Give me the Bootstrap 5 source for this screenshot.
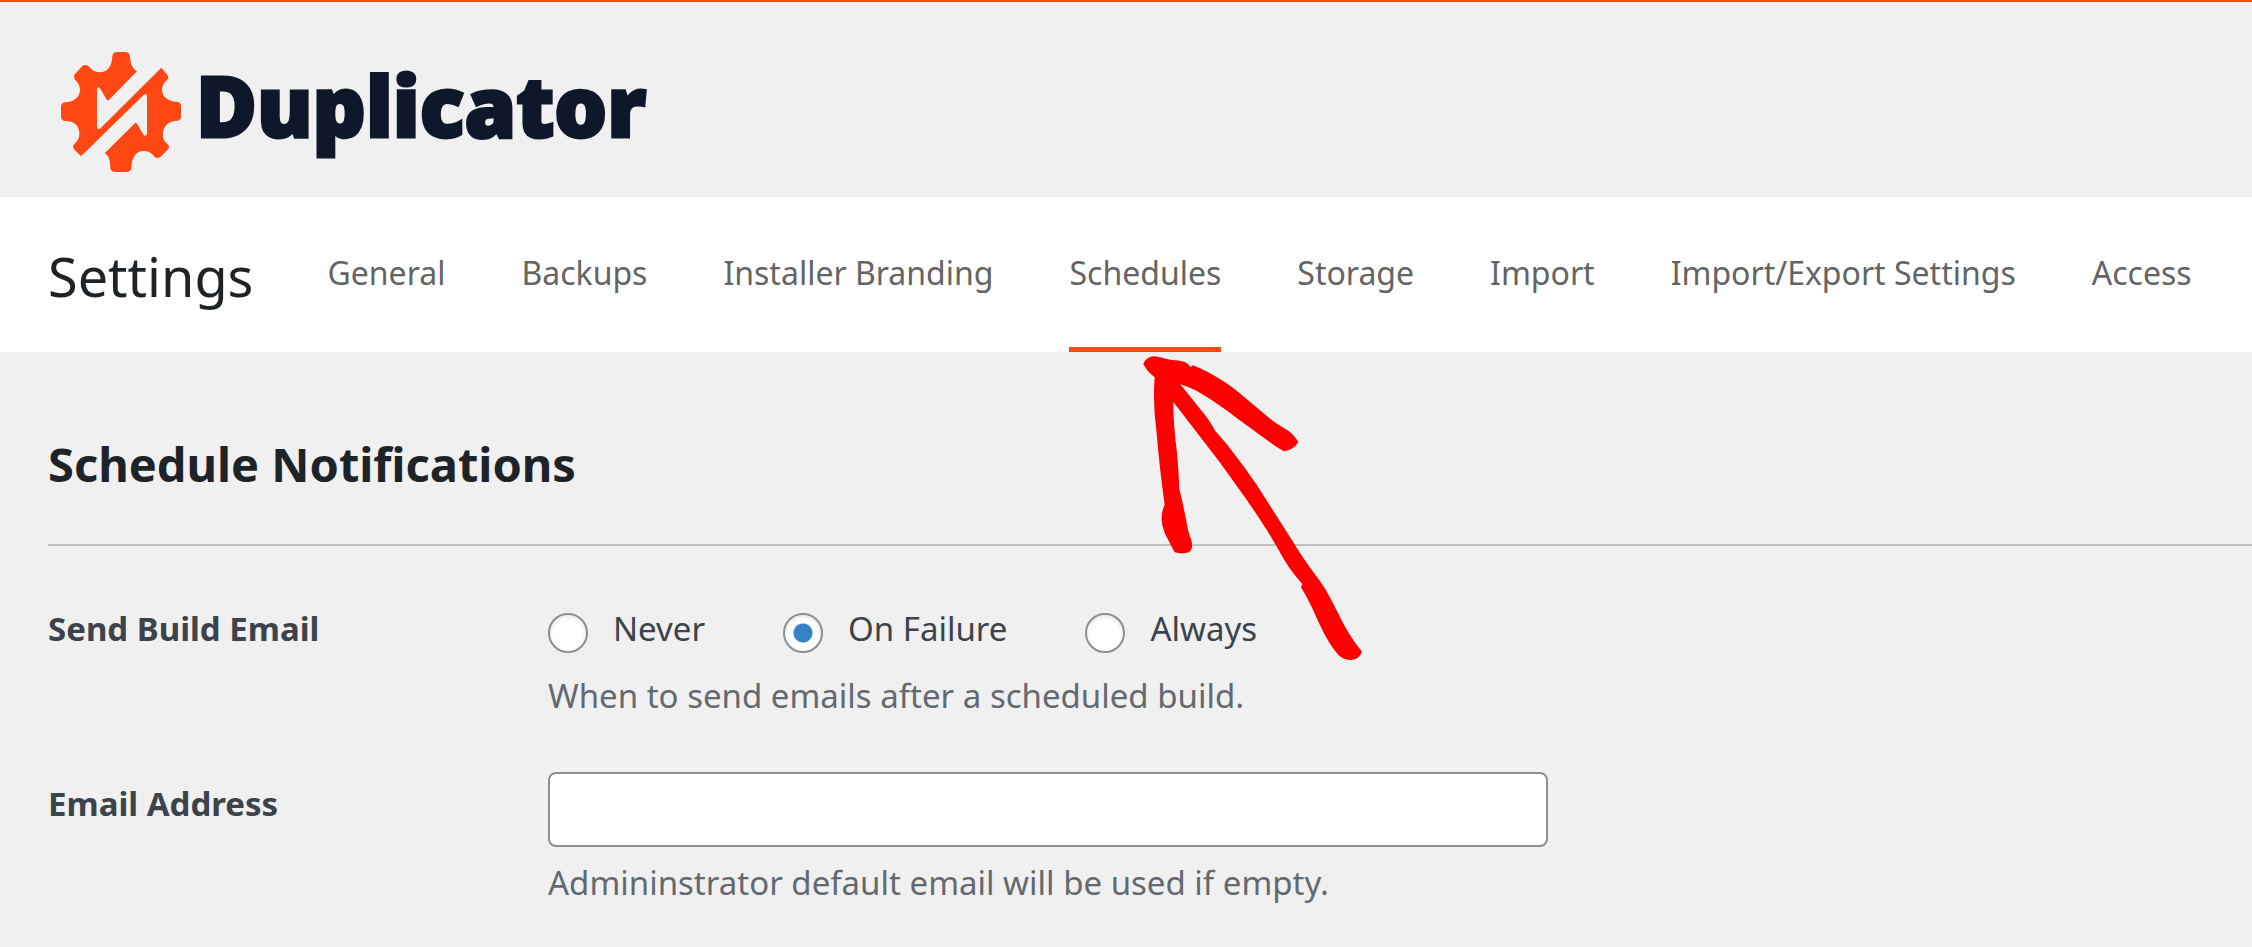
<!DOCTYPE html>
<html lang="en">
<head>
<meta charset="utf-8">
<meta name="viewport" content="width=device-width, initial-scale=1">
<title>Duplicator Settings</title>
<link href="https://cdn.jsdelivr.net/npm/bootstrap@5.3.0/dist/css/bootstrap.min.css" rel="stylesheet">
<style>
  :root { --brand: #ff4713; --gutter: 48px; }
  body { background: #f0f0f0; color: #3c434a; font-family: "Noto Sans", "Open Sans", sans-serif; font-size: 33px; line-height: 48px; overflow-x: hidden; }
  .site-head { border-top: 2px solid var(--brand); padding: 49px 60px 24px; }
  .brand-link { gap: 14px; }
  .brand-gear { width: 122px; height: 122px; }
  .wordmark { font-family: "Open Sans", sans-serif; font-weight: 800; font-size: 83px; line-height: 88px; color: #0f172a; padding-bottom: 14px; -webkit-text-stroke: 3px #0f172a; }
  .tab-bar { background: #fff; padding: 0 var(--gutter); column-gap: 74px; }
  .page-title { font-size: 54px; line-height: 72px; font-weight: 400; color: #1d2327; padding-top: 43px; }
  .tab-list { column-gap: 76px; }
  .tab-list .nav-link { color: #646464; padding: 53px 0 51px; border-bottom: 5px solid transparent; font-size: 32px; line-height: 46px; }
  .tab-list .nav-link.active { border-color: var(--brand); }
  .pointer-arrow { left: 50px; top: 133px; width: 280px; height: 350px; pointer-events: none; z-index: 5; }
  main { padding-left: var(--gutter); }
  .section-title { font-size: 47px; line-height: 64px; font-weight: 700; color: #1d2327; padding: 80px 0 48px; border-bottom: 2px solid #bfbfbf; margin-bottom: 59px; }
  .setting { display: grid; grid-template-columns: 500px minmax(0, 1000px); }
  .setting + .setting { margin-top: 52px; }
  .setting-name { font-weight: 700; }
  .choices { column-gap: 78px; margin-bottom: 19px; }
  .choice { gap: 25px; }
  .choice .form-check-input { width: 40px; height: 40px; margin: 8px 0 0; border: 2px solid #8c8f94; background-color: #fff; box-shadow: inset 0 2px 4px rgba(0,0,0,.1); flex: none; }
  .choice .form-check-input:checked { background-image: radial-gradient(circle, #3582c4 9px, transparent 10px); }
  .hint { color: #646970; }
  .email-box { height: 75px; border: 2px solid #8c8f94; border-radius: 8px; font-size: 33px; margin-bottom: 12px; }
</style>
</head>
<body>
<header class="site-head d-flex">
  <a class="brand-link d-flex align-items-center text-decoration-none" href="#">
    <svg class="brand-gear" viewBox="60 63 366 366" aria-hidden="true">
      <path fill="#ff4713" d="M217 78Q219 66 232 66H256Q269 67 270 80C271 101 277 115 291 124L364 113L383 136Q387 143 381 150C371 159 366 168 366 181C367 200 383 215 412 216Q422 217 423 228V260Q423 270 412 272C386 273 371 287 369 307C367 322 370 332 382 342Q391 350 384 358L364 379Q354 388 343 380C335 369 325 363 309 363C289 364 275 381 274 413Q272 426 261 426H226Q213 426 211 413C210 387 207 378 194 370L123 379L102 358Q96 350 103 342C114 333 119 323 118 309C117 286 101 273 76 273Q64 272 63 260V230Q64 218 75 217C102 216 119 202 120 181C120 167 115 158 105 149Q99 142 103 134L126 109Q135 102 145 108C155 121 166 127 180 127C201 126 216 111 217 78Z"/>
      <path fill="#f0f0f0" d="M291 124L207 209Q202 214 199 207L181 176Q174 168 171 176V291Q172 299 180 296L364 113L350 95L300 110Z"/>
      <path fill="#f0f0f0" d="M123 379L310 196Q318 189 321 197V312Q317 321 311 315L291 281Q287 275 283 281L194 370L150 400Z"/>
    </svg>
    <span class="wordmark">Duplicator</span>
  </a>
</header>

<nav class="tab-bar d-flex align-items-start" aria-label="Settings sections">
  <h1 class="page-title m-0">Settings</h1>
  <ul class="tab-list nav">
    <li class="nav-item"><a class="nav-link" href="#">General</a></li>
    <li class="nav-item"><a class="nav-link" href="#">Backups</a></li>
    <li class="nav-item"><a class="nav-link" href="#">Installer Branding</a></li>
    <li class="nav-item position-relative">
      <a class="nav-link active" aria-current="page" href="#">Schedules</a>
      <svg class="pointer-arrow position-absolute" viewBox="0 0 840 1050" aria-hidden="true">
        <path fill="#f00" d="M73 102Q83 78 107 79C130 82 145 90 170 91C193 93 205 97 214 111L222 106C270 126 315 151 355 184L430 247Q463 276 498 296C513 304 527 317 538 336Q523 361 495 364Q477 354 460 342L360 269C310 233 246 181 184 163L250 245Q270 268 289 303C334 353 371 404 410 460L520 632Q552 686 600 749C630 789 650 837 680 893Q698 926 729 965Q720 988 697 990Q667 991 648 962C627 936 609 900 592 862Q570 811 546 772L550 762Q510 720 476 655C426 566 369 490 300 394L163 216C162 258 168 318 174 368Q179 420 181 478C191 513 196 545 202 574Q208 610 217 630Q226 666 200 669Q185 671 167 667Q150 634 138 611Q118 565 137 524Q122 420 112 300Q101 220 107 142Q84 124 73 102Z"/>
      </svg>
    </li>
    <li class="nav-item"><a class="nav-link" href="#">Storage</a></li>
    <li class="nav-item"><a class="nav-link" href="#">Import</a></li>
    <li class="nav-item"><a class="nav-link" href="#">Import/Export Settings</a></li>
    <li class="nav-item"><a class="nav-link" href="#">Access</a></li>
  </ul>
</nav>

<main>
  <form>
    <h2 class="section-title mt-0">Schedule Notifications</h2>

    <div class="setting" role="radiogroup" aria-labelledby="build-email">
      <div class="setting-name" id="build-email">Send Build Email</div>
      <div>
        <div class="choices d-flex flex-wrap">
          <div class="choice d-flex">
            <input class="form-check-input" type="radio" name="build" id="never">
            <label for="never">Never</label>
          </div>
          <div class="choice d-flex">
            <input class="form-check-input" type="radio" name="build" id="failure" checked>
            <label for="failure">On Failure</label>
          </div>
          <div class="choice d-flex">
            <input class="form-check-input" type="radio" name="build" id="always">
            <label for="always">Always</label>
          </div>
        </div>
        <p class="hint mb-0">When to send emails after a scheduled build.</p>
      </div>
    </div>

    <div class="setting">
      <label class="setting-name pt-2" for="email">Email Address</label>
      <div>
        <input class="email-box form-control" type="email" id="email" aria-describedby="email-hint">
        <p class="hint mb-0" id="email-hint">Admininstrator default email will be used if empty.</p>
      </div>
    </div>
  </form>
</main>
<script src="https://cdn.jsdelivr.net/npm/bootstrap@5.3.0/dist/js/bootstrap.bundle.min.js"></script>
</body>
</html>
